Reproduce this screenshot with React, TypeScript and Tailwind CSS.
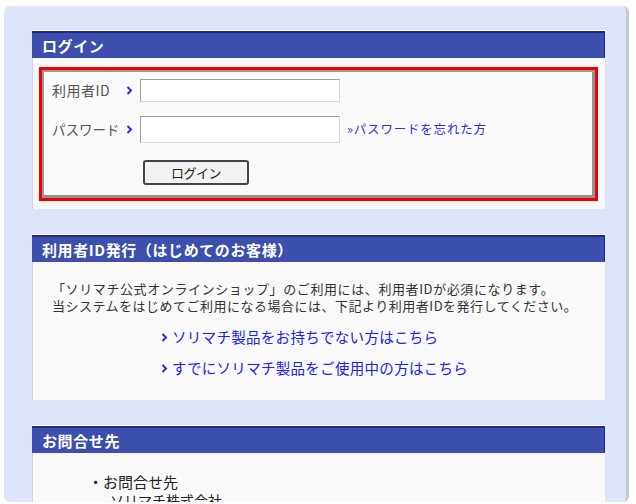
import { ReactNode } from 'react';

const font = { fontFamily: '"Noto Sans CJK JP", "Noto Sans", sans-serif' };

function Arrow({ className = '' }: { className?: string }) {
  return (
    <svg width="7" height="9" viewBox="0 0 7 9" className={className}>
      <path d="M1.5 1 L5 4.5 L1.5 8" stroke="#2a2ee0" strokeWidth="2" fill="none" />
    </svg>
  );
}

function Section({ title, children, bodyClass = '' }: { title: string; children: ReactNode; bodyClass?: string }) {
  return (
    <div className="border-t border-white">
      <div className="h-[27px] bg-[#3c4fac] border-t-2 border-[#1e2a8a] border-r border-r-[#1e2a8a] flex items-center pl-[10px]">
        <span className="text-white font-bold text-[15px] leading-none tracking-[0.6px]">{title}</span>
      </div>
      <div className={`bg-[#f9f9f9] border-l border-l-[#cfd3dc] ${bodyClass}`}>{children}</div>
    </div>
  );
}

export default function App() {
  return (
    <div className="w-[636px] h-[504px] bg-white overflow-hidden" style={font}>
      <div className="ml-[4px] mt-[6px] w-[625px] h-[496px] bg-[#dee5f8] rounded-[6px] border-r-[3px] border-r-[#c4c9d6] pl-[28px] pr-[21px] pt-[24px] flex flex-col gap-[25px] overflow-hidden">
        <Section title="ログイン" bodyClass="h-[151px] pt-[9px] pl-[6px] pr-[7px]">
          <div className="h-[134px] border-[3px] border-[#f00000]">
            <div className="h-full border-l-2 border-t-2 border-[#9a9a9a] border-r-[3px] border-b-[3px] border-r-[#8e948e] border-b-[#8e948e] bg-[#fafafa] pl-[8px] pt-[6px]">
              <div className="flex items-center h-[24px]">
                <span className="w-[80px] text-[14px] text-[#555] tracking-[0.5px]">利用者ID</span>
                <Arrow className="ml-[-6px] mr-[7px]" />
                <div className="w-[200px] h-[23px] bg-white border border-[#d6d6d6] border-t-[#a0a0a0] border-l-[#a0a0a0]" />
              </div>
              <div className="flex items-center h-[27px] mt-[14px]">
                <span className="w-[80px] text-[13.5px] text-[#555]">パスワード</span>
                <Arrow className="ml-[-6px] mr-[7px]" />
                <div className="w-[200px] h-[27px] bg-white border border-[#d6d6d6] border-t-[#a0a0a0] border-l-[#a0a0a0]" />
                <span className="ml-[7px] text-[12.5px] text-[#2a2ee0] tracking-[0.8px]">»パスワードを忘れた方</span>
              </div>
              <div className="pl-[91px] mt-[17px]">
                <div className="w-[106px] h-[25px] rounded-[3px] border-2 border-[#40464e] bg-[#f2f2f0] flex items-center justify-center text-[13px] text-[#222] tracking-[-0.5px]">
                  ログイン
                </div>
              </div>
            </div>
          </div>
        </Section>

        <Section title="利用者ID発行（はじめてのお客様）" bodyClass="h-[138px] pt-[18px] pl-[19px]">
          <p className="text-[13px] leading-[17px] text-[#333] tracking-[0.6px]">
            「ソリマチ公式オンラインショップ」のご利用には、利用者IDが必須になります。
          </p>
          <p className="text-[13px] leading-[17px] text-[#333] tracking-[0.5px]">
            当システムをはじめてご利用になる場合には、下記より利用者IDを発行してください。
          </p>
          <div className="pl-[109px] mt-[14px] flex flex-col gap-[13px]">
            <div className="flex items-center gap-[4px] text-[14.5px] leading-[18px] text-[#2020e8] tracking-[0.3px]">
              <Arrow />
              <span>ソリマチ製品をお持ちでない方はこちら</span>
            </div>
            <div className="flex items-center gap-[4px] text-[14.5px] leading-[18px] text-[#2020e8] tracking-[0.3px]">
              <Arrow />
              <span>すでにソリマチ製品をご使用中の方はこちら</span>
            </div>
          </div>
        </Section>

        <Section title="お問合せ先" bodyClass="h-[80px] pt-[20px] pl-[55px]">
          <p className="text-[15px] leading-[18px] text-[#222]">・お問合せ先</p>
          <p className="text-[14px] leading-[16px] text-[#222] pl-[22px] mt-[1px]">ソリマチ株式会社</p>
        </Section>
      </div>
    </div>
  );
}
